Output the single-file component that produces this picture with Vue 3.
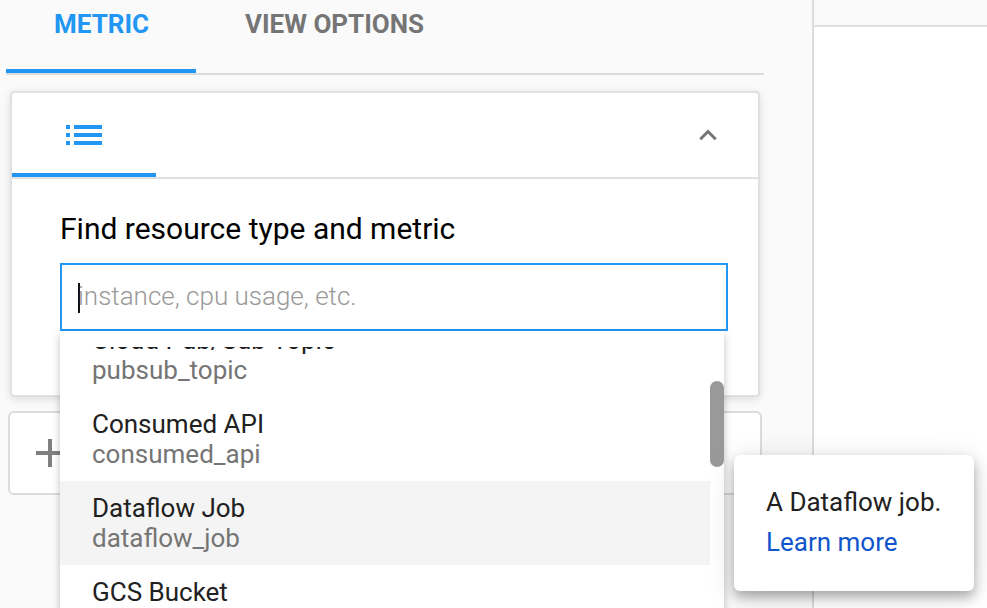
<script setup>
import { ref } from 'vue'

const tabs = ['METRIC', 'VIEW OPTIONS']
const activeTab = ref('METRIC')

const resources = [
  { name: 'Cloud Pub/Sub Topic', id: 'pubsub_topic' },
  { name: 'Consumed API', id: 'consumed_api' },
  { name: 'Dataflow Job', id: 'dataflow_job' },
  { name: 'GCS Bucket', id: 'gcs_bucket' },
]
const highlighted = ref('dataflow_job')
</script>

<template>
  <div class="page">
    <section class="panel">
      <nav class="tabs">
        <button
          v-for="tab in tabs"
          :key="tab"
          class="tab"
          :class="{ active: tab === activeTab }"
          @click="activeTab = tab"
        >{{ tab }}</button>
      </nav>

      <div class="card">
        <header class="card-head">
          <div class="card-tab">
            <svg width="36" height="20" viewBox="0 0 36 20" fill="#2196f3" shape-rendering="crispEdges">
              <path d="M0 0h4v4H0zM8 0h28v4H8zM0 8h4v4H0zM8 8h28v4H8zM0 16h4v4H0zM8 16h28v4H8z" />
            </svg>
          </div>
          <svg class="chevron" width="20" height="14" viewBox="0 0 20 14">
            <path d="M2.3 11.2 10 3.5 17.7 11.2" fill="none" stroke="#757575" stroke-width="3" />
          </svg>
        </header>
        <div class="card-body">
          <h2 class="title">Find resource type and metric</h2>
          <div class="field">
            <span class="caret"></span>
            <span class="placeholder">instance, cpu usage, etc.</span>
            <div class="dropdown">
              <div class="viewport">
                <ul class="list">
                  <li
                    v-for="r in resources"
                    :key="r.id"
                    class="item"
                    :class="{ hover: r.id === highlighted }"
                  >
                    <div class="name">{{ r.name }}</div>
                    <div class="id">{{ r.id }}</div>
                  </li>
                </ul>
                <div class="track"><div class="thumb"></div></div>
              </div>
            </div>
          </div>
        </div>
      </div>

      <div class="add">
        <svg width="28" height="28" viewBox="0 0 28 28" fill="#808080" shape-rendering="crispEdges">
          <path d="M12 0h4v12h12v4H16v12h-4V16H0v-4h12z" />
        </svg>
      </div>
    </section>

    <section class="chart">
      <div class="chart-bar"></div>
    </section>

    <aside class="tooltip">
      <div class="tip-text">A Dataflow job.</div>
      <a class="tip-link">Learn more</a>
    </aside>
  </div>
</template>

<style>
body {
  margin: 0;
  overflow: hidden;
}
</style>

<style scoped>
.page {
  position: relative;
  display: flex;
  width: 987px;
  height: 608px;
  overflow: hidden;
  background: #fafafa;
  font-family: Roboto, "Liberation Sans", sans-serif;
  font-size: 26px;
  color: #212121;
}
.page * {
  box-sizing: border-box;
}
.panel {
  width: 814px;
  height: 608px;
  flex: none;
  padding: 0 50px 0 6px;
  border-right: 2px solid #dcdcdc;
  position: relative;
  z-index: 1;
}
.tabs {
  display: flex;
  width: 758px;
  height: 75px;
  border-bottom: 2px solid #dcdcdc;
}
.tab {
  height: 73px;
  padding: 0 49px 20px;
  margin: 0;
  border: 0;
  border-bottom: 4px solid transparent;
  background: none;
  font: 700 26px/49px Roboto, "Liberation Sans", sans-serif;
  color: #757575;
  white-space: nowrap;
}
.tab.active {
  width: 190px;
  padding: 0 48px 20px;
  color: #2196f3;
  border-bottom-color: #2196f3;
}
.card {
  width: 750px;
  height: 306px;
  margin: 16px 0 0 4px;
  background: #fff;
  border: 2px solid #e0e0e0;
  border-radius: 4px;
  box-shadow: 0 2px 8px rgba(0, 0, 0, 0.12);
  position: relative;
  z-index: 2;
}
.card-head {
  display: flex;
  justify-content: space-between;
  height: 86px;
  border-bottom: 2px solid #e0e0e0;
}
.card-tab {
  width: 144px;
  height: 84px;
  display: flex;
  justify-content: center;
  padding-top: 32px;
  border-bottom: 4px solid #2196f3;
}
.chevron {
  margin: 35px 40px 0 0;
}
.card-body {
  padding: 32px 30px 0 48px;
}
.title {
  margin: 0;
  font-size: 30px;
  line-height: 36px;
  font-weight: 400;
  color: #000;
  white-space: nowrap;
}
.field {
  position: relative;
  display: flex;
  align-items: center;
  width: 668px;
  height: 68px;
  margin-top: 16px;
  padding-left: 16px;
  border: 2px solid #2196f3;
  background: #fff;
}
.caret {
  width: 2px;
  height: 30px;
  margin: 2px -2px 0 0;
  background: #111;
}
.placeholder {
  font-weight: 300;
  line-height: 30px;
  padding-bottom: 2px;
  color: #999;
  white-space: nowrap;
}
.dropdown {
  position: absolute;
  top: 66px;
  left: -2px;
  width: 664px;
  height: 320px;
  padding-top: 16px;
  background: #fff;
  box-shadow: 0 4px 8px rgba(0, 0, 0, 0.25);
}
.viewport {
  display: flex;
  height: 304px;
  overflow: hidden;
}
.list {
  flex: 1;
  margin: -34px 0 0;
  padding: 0;
  list-style: none;
}
.item {
  height: 84px;
  padding: 12px 32px;
  line-height: 30px;
  white-space: nowrap;
}
.item.hover {
  background: #f4f4f4;
}
.id {
  color: #757575;
}
.track {
  width: 14px;
  padding-top: 34px;
}
.thumb {
  height: 86px;
  border-radius: 7px;
  background: #999;
}
.add {
  width: 754px;
  height: 84px;
  margin: 14px 0 0 2px;
  padding: 26px;
  background: #fff;
  border: 2px solid #dcdcdc;
  border-radius: 6px;
}
.chart {
  flex: 1;
  background: #fff;
}
.chart-bar {
  height: 27px;
  background: #fafafa;
  border-bottom: 2px solid #e0e0e0;
}
.tooltip {
  position: absolute;
  z-index: 5;
  left: 734px;
  top: 455px;
  width: 240px;
  height: 136px;
  padding: 27px 32px;
  border-radius: 6px;
  background: #fff;
  box-shadow: 0 6px 12px rgba(0, 0, 0, 0.3), 0 4px 32px rgba(0, 0, 0, 0.11);
  line-height: 40px;
  white-space: nowrap;
}
.tip-link {
  color: #1155cc;
}
</style>
